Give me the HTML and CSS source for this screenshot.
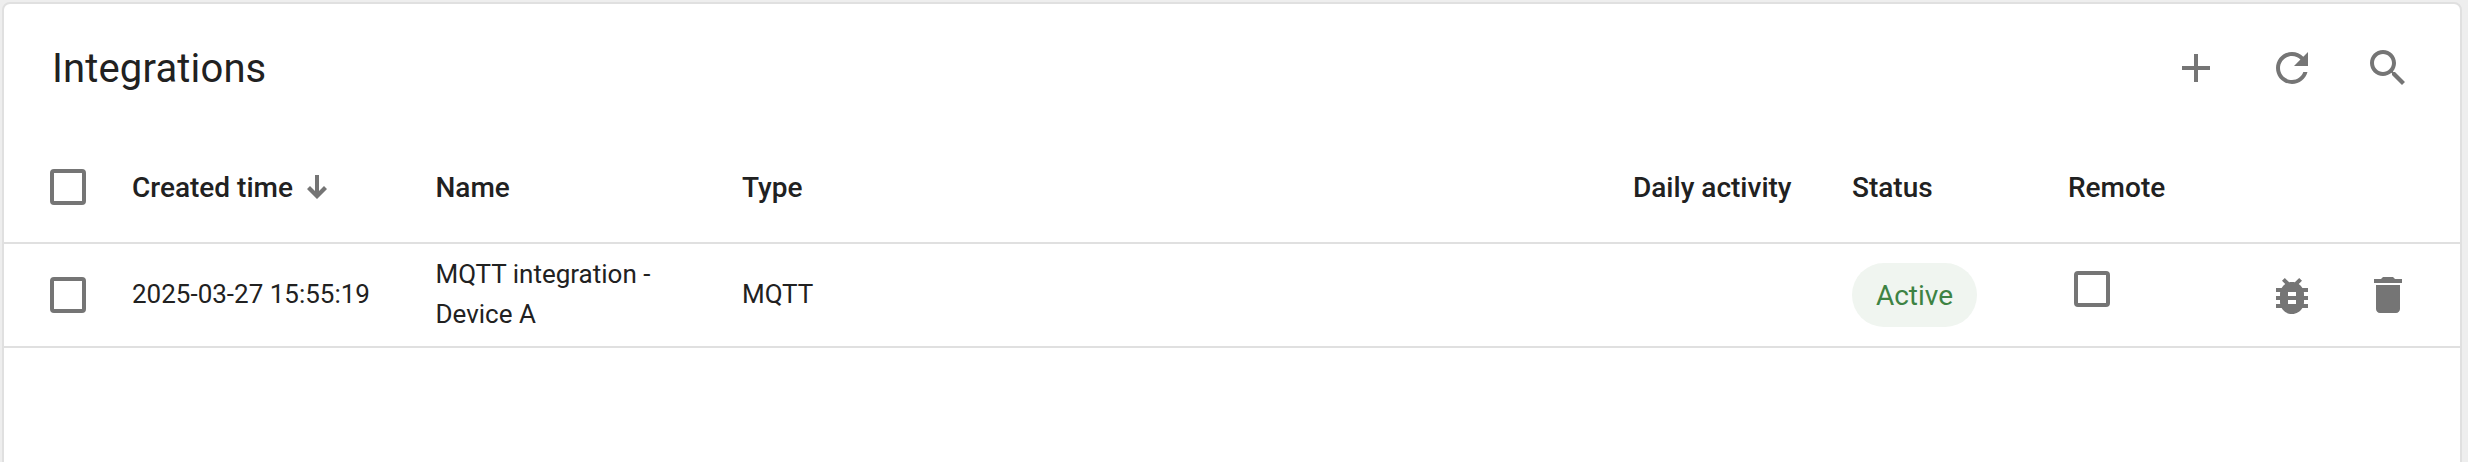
FILE: index.html
```html
<!DOCTYPE html>
<html lang="en">
    <head>
        <meta charset="utf-8">
        <title>Integrations</title>
        <link rel="stylesheet" href="styles.css">
    </head>
    <body>
        <div class="card">
            <div class="toolbar">
                <h1>Integrations</h1>
                <div class="actions">
                    <button title="Add integration">
                        <svg viewBox="0 0 24 24"><path d="M19 13h-6v6h-2v-6H5v-2h6V5h2v6h6v2z"/></svg>
                    </button>
                    <button title="Refresh">
                        <svg viewBox="0 0 24 24"><path d="M17.65 6.35C16.2 4.9 14.21 4 12 4c-4.42 0-7.99 3.58-7.99 8s3.57 8 7.99 8c3.73 0 6.84-2.55 7.73-6h-2.08c-.82 2.33-3.04 4-5.65 4-3.31 0-6-2.69-6-6s2.69-6 6-6c1.66 0 3.14.69 4.22 1.78L13 11h7V4l-2.35 2.35z"/></svg>
                    </button>
                    <button title="Search">
                        <svg viewBox="0 0 24 24"><path d="M15.5 14h-.79l-.28-.27C15.41 12.59 16 11.11 16 9.5 16 5.91 13.09 3 9.5 3S3 5.91 3 9.5 5.91 16 9.5 16c1.61 0 3.09-.59 4.23-1.57l.27.28v.79l5 4.99L20.49 19l-4.99-5zm-6 0C7.01 14 5 11.99 5 9.5S7.01 5 9.5 5 14 7.01 14 9.5 11.99 14 9.5 14z"/></svg>
                    </button>
                </div>
            </div>

            <div class="row head">
                <div><input type="checkbox"></div>
                <div class="sorted">
                    <span>Created time</span>
                    <svg class="arrow" viewBox="0 0 20 24"><path d="M8 0h4v16l5-5 3 3-10 10L0 14l3-3 5 5z"/></svg>
                </div>
                <div><span>Name</span></div>
                <div><span>Type</span></div>
                <div><span>Daily activity</span></div>
                <div><span>Status</span></div>
                <div><span>Remote</span></div>
                <div></div>
            </div>

            <div class="row">
                <div><input type="checkbox"></div>
                <div class="text">2025-03-27 15:55:19</div>
                <div class="text name">MQTT integration - Device A</div>
                <div class="text">MQTT</div>
                <div></div>
                <div><span class="status">Active</span></div>
                <div class="remote"><input type="checkbox"></div>
                <div class="actions">
                    <button class="debug" title="Debug">
                        <svg viewBox="0 0 24 24"><path d="M20 8h-2.81c-.45-.78-1.07-1.45-1.82-1.96L17 4.41 15.59 3l-2.17 2.17C12.96 5.06 12.49 5 12 5c-.49 0-.96.06-1.41.17L8.41 3 7 4.41l1.62 1.63C7.88 6.55 7.26 7.22 6.81 8H4v2h2.09c-.05.33-.09.66-.09 1v1H4v2h2v1c0 .34.04.67.09 1H4v2h2.81c1.04 1.79 2.97 3 5.19 3s4.15-1.21 5.19-3H20v-2h-2.09c.05-.33.09-.66.09-1v-1h2v-2h-2v-1c0-.34-.04-.67-.09-1H20V8zm-6 8h-4v-2h4v2zm0-4h-4v-2h4v2z"/></svg>
                    </button>
                    <button title="Delete">
                        <svg viewBox="0 0 24 24"><path d="M6 19c0 1.1.9 2 2 2h8c1.1 0 2-.9 2-2V7H6v12zM19 4h-3.5l-1-1h-5l-1 1H5v2h14V4z"/></svg>
                    </button>
                </div>
            </div>
        </div>
    </body>
</html>
```

FILE: styles.css
```css
* {
    box-sizing: border-box;
}

body {
    height: 100vh;
    margin: 0;
    padding: 2px 6px 0 2px;
    overflow: hidden;
    background: #eee;
    color: #212121;
    font-family: Roboto, sans-serif;
    font-size: 26px;
}

.card {
    height: 480px;
    border: 2px solid #e0e0e0;
    border-radius: 8px;
    background: white;
}

.toolbar {
    display: flex;
    align-items: center;
    justify-content: space-between;
    height: 128px;
    padding: 0 48px;
}

h1 {
    margin: 0;
    font-size: 40px;
    font-weight: 400;
    letter-spacing: 0.15px;
}

.actions {
    display: flex;
    justify-content: flex-end;
    gap: 48px;
}

button {
    display: block;
    width: 48px;
    height: 48px;
    padding: 0;
    border: none;
    background: none;
}

button svg {
    display: block;
    fill: #757575;
}

.debug {
    margin: 1px 0 -1px;
}

.row {
    display: grid;
    grid-template-columns: 82px 303.5px 306.5px 891px 219px 216px 1fr 150px;
    align-items: center;
    height: 104px;
    padding: 0 48px 0 46px;
    border-bottom: 2px solid #e0e0e0;
    line-height: 40px;
}

.head {
    height: 112px;
    font-size: 28px;
    font-weight: 500;
}

.head span {
    display: block;
    padding-top: 2px;
}

.text {
    padding-bottom: 2px;
}

input {
    display: block;
    width: 36px;
    height: 36px;
    margin: 0;
    border: 4px solid #757575;
    border-radius: 4px;
    appearance: none;
}

.sorted {
    display: flex;
    align-items: center;
}

.arrow {
    width: 20px;
    height: 24px;
    margin-left: 14px;
    fill: #757575;
}

.name {
    padding-right: 60px;
}

.status {
    display: block;
    width: 125px;
    height: 64px;
    padding-top: 1px;
    border-radius: 32px;
    background: #f0f5f0;
    color: #3d8343;
    font-size: 28px;
    line-height: 64px;
    text-align: center;
}

.remote {
    padding: 0 0 12px 6px;
}
```
